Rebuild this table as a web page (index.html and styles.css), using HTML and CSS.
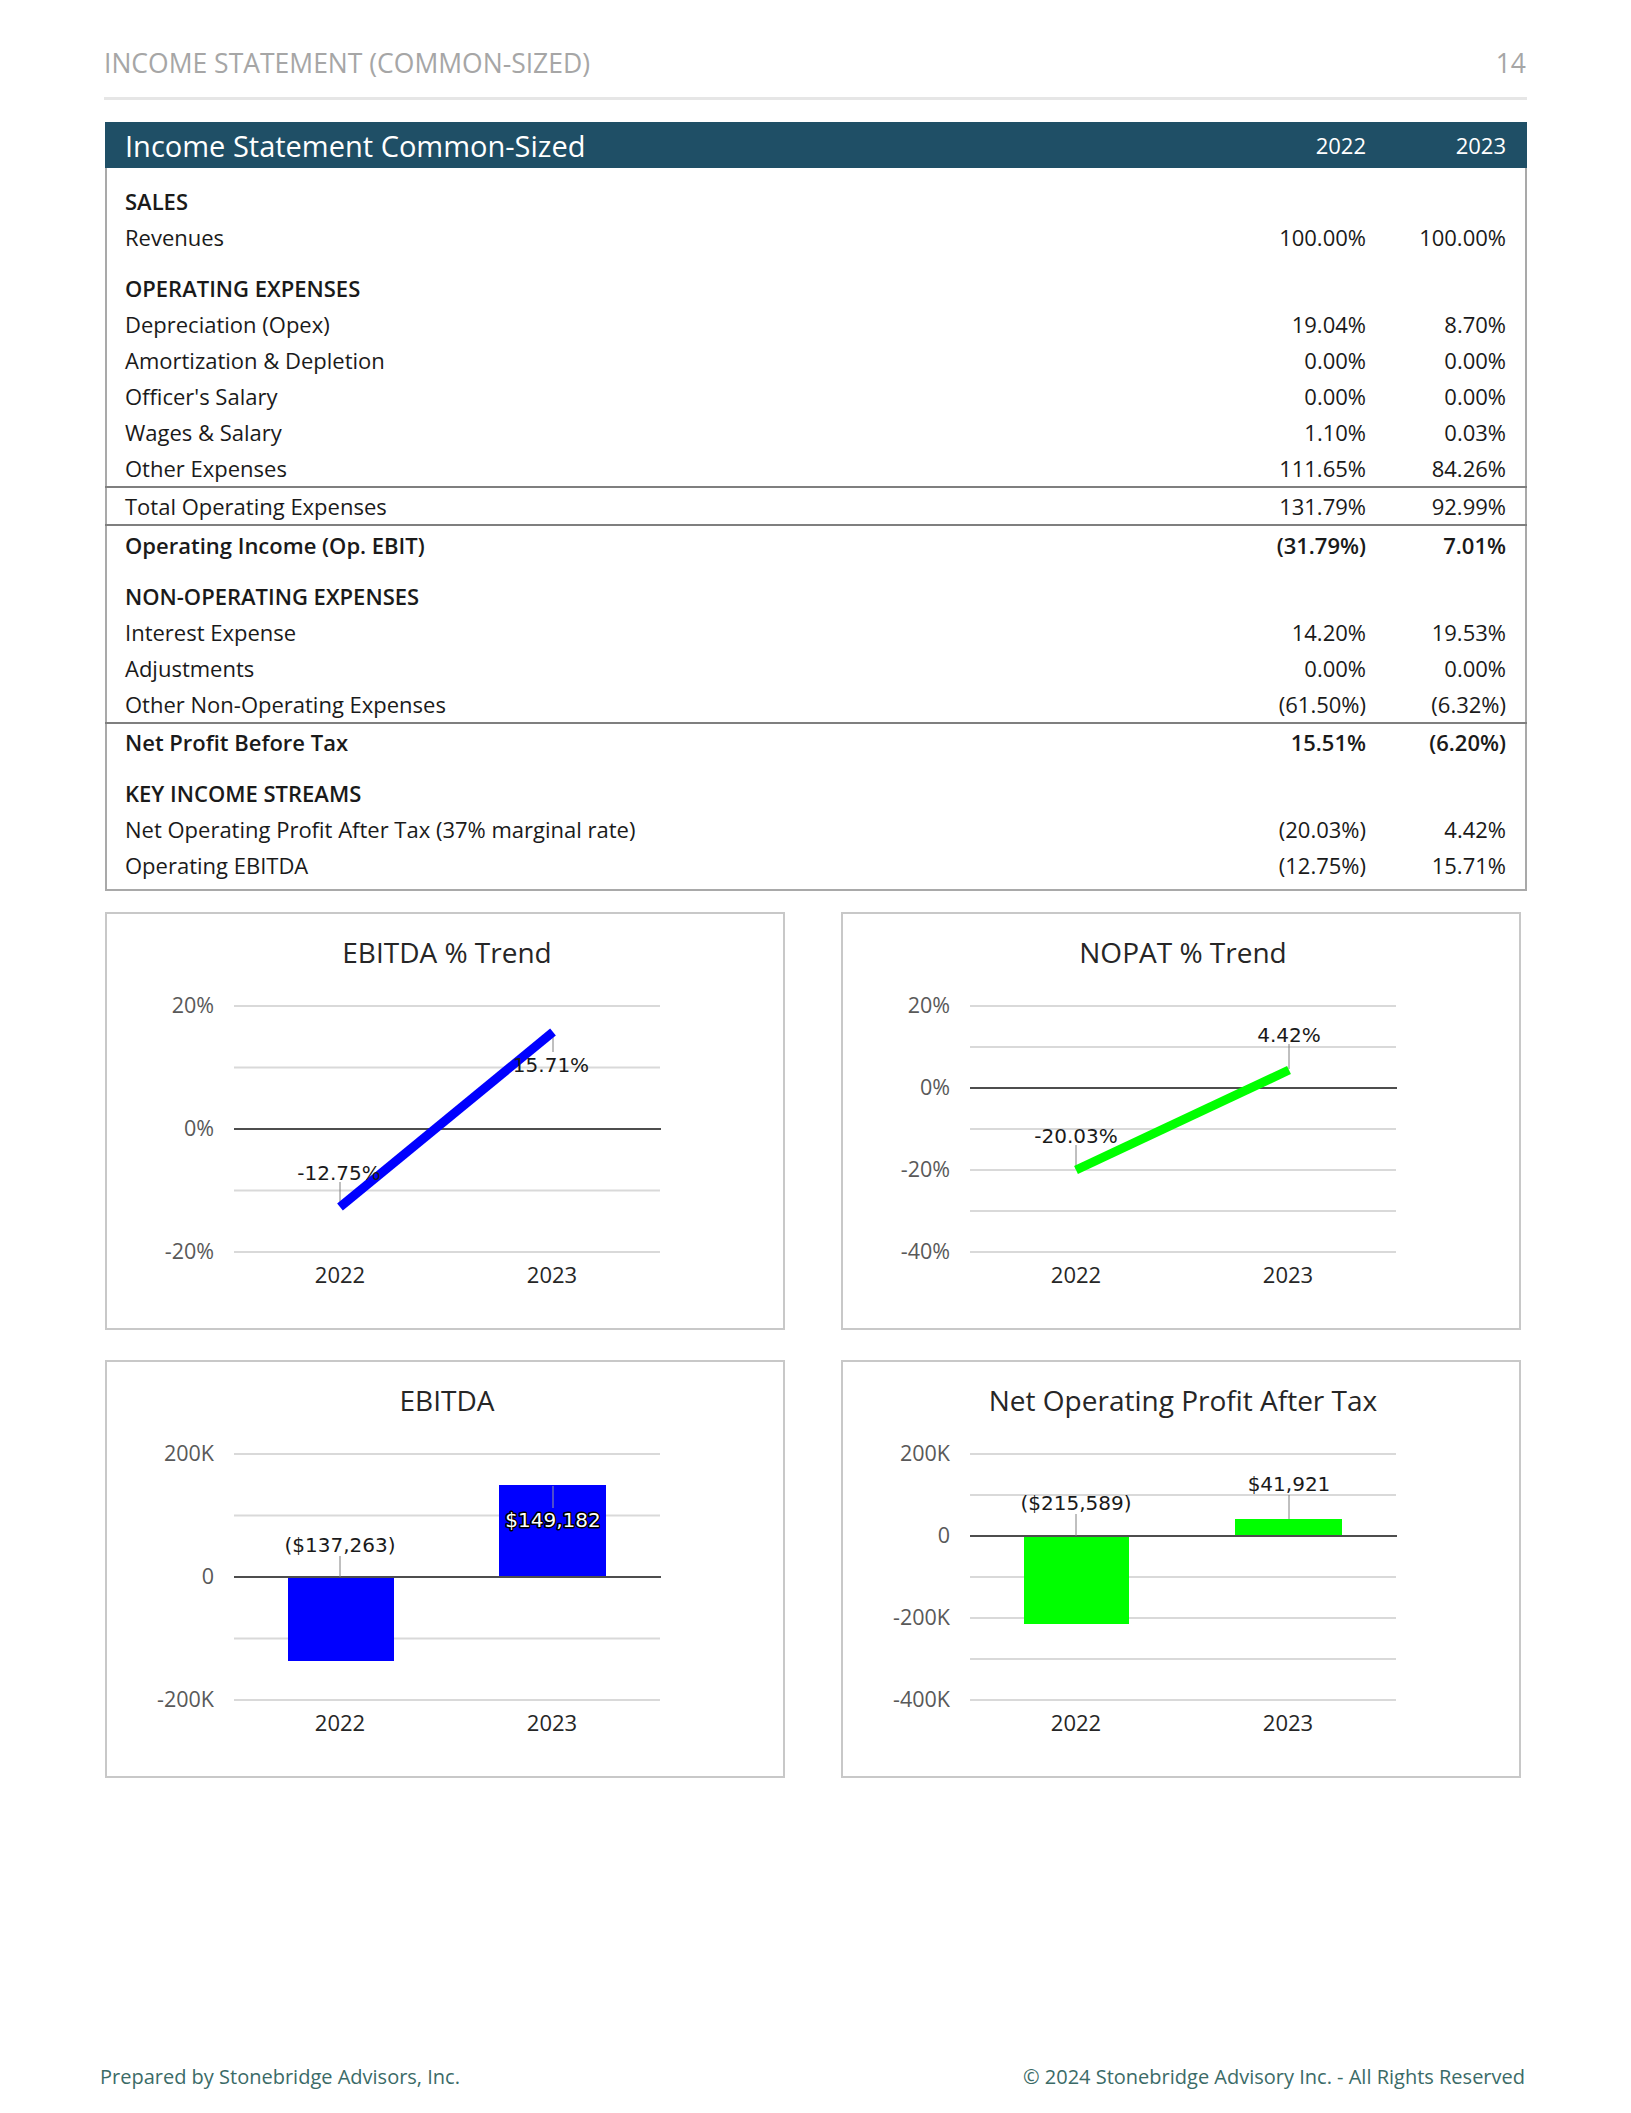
FILE: index.html
```html
<!DOCTYPE html>
<html lang="en">
<head>
<meta charset="utf-8">
<title>Income Statement (Common-Sized)</title>
<link rel="stylesheet" href="styles.css">
</head>
<body>
<div class="page">
  <header class="page-head">
    <span class="page-title">INCOME STATEMENT (COMMON-SIZED)</span>
    <span class="page-num">14</span>
  </header>

  <section class="statement">
    <div class="bar">
      <span class="bar-title">Income Statement Common-Sized</span>
      <span class="num">2022</span>
      <span class="num">2023</span>
    </div>
    <div class="rows">
      <div class="row section first"><span>SALES</span><span></span><span></span></div>
      <div class="row"><span>Revenues</span><span class="num">100.00%</span><span class="num">100.00%</span></div>

      <div class="row section"><span>OPERATING EXPENSES</span><span></span><span></span></div>
      <div class="row"><span>Depreciation (Opex)</span><span class="num">19.04%</span><span class="num">8.70%</span></div>
      <div class="row"><span>Amortization &amp; Depletion</span><span class="num">0.00%</span><span class="num">0.00%</span></div>
      <div class="row"><span>Officer's Salary</span><span class="num">0.00%</span><span class="num">0.00%</span></div>
      <div class="row"><span>Wages &amp; Salary</span><span class="num">1.10%</span><span class="num">0.03%</span></div>
      <div class="row"><span>Other Expenses</span><span class="num">111.65%</span><span class="num">84.26%</span></div>
      <div class="row ruled"><span>Total Operating Expenses</span><span class="num">131.79%</span><span class="num">92.99%</span></div>
      <div class="row strong after-rule"><span>Operating Income (Op. EBIT)</span><span class="num">(31.79%)</span><span class="num">7.01%</span></div>

      <div class="row section"><span>NON-OPERATING EXPENSES</span><span></span><span></span></div>
      <div class="row"><span>Interest Expense</span><span class="num">14.20%</span><span class="num">19.53%</span></div>
      <div class="row"><span>Adjustments</span><span class="num">0.00%</span><span class="num">0.00%</span></div>
      <div class="row"><span>Other Non-Operating Expenses</span><span class="num">(61.50%)</span><span class="num">(6.32%)</span></div>
      <div class="row strong top-rule"><span>Net Profit Before Tax</span><span class="num">15.51%</span><span class="num">(6.20%)</span></div>

      <div class="row section"><span>KEY INCOME STREAMS</span><span></span><span></span></div>
      <div class="row"><span>Net Operating Profit After Tax (37% marginal rate)</span><span class="num">(20.03%)</span><span class="num">4.42%</span></div>
      <div class="row"><span>Operating EBITDA</span><span class="num">(12.75%)</span><span class="num">15.71%</span></div>
    </div>
  </section>

  <section class="charts">
    <!-- EBITDA % Trend -->
    <div class="chart">
      <svg class="plot" viewBox="0 0 676 414" width="676" height="414">
        <text class="c-title" x="340" y="49">EBITDA % Trend</text>
        <g class="grid">
          <line x1="127" y1="92" x2="553" y2="92"/>
          <line x1="127" y1="153.5" x2="553" y2="153.5"/>
          <line x1="127" y1="276.5" x2="553" y2="276.5"/>
          <line x1="127" y1="338" x2="553" y2="338"/>
        </g>
        <line class="zero" x1="127" y1="215" x2="554" y2="215"/>
        <g class="ylab">
          <text x="107" y="99">20%</text>
          <text x="107" y="222">0%</text>
          <text x="107" y="345">-20%</text>
        </g>
        <g class="xlab">
          <text x="233" y="369">2022</text>
          <text x="445" y="369">2023</text>
        </g>
        <line class="leader" x1="233" y1="268" x2="233" y2="292"/>
        <line class="leader" x1="446" y1="120" x2="446" y2="138"/>
        <polyline class="series-blue" points="233,293 446,118"/>
        <text class="dlabel" x="232" y="266">-12.75%</text>
        <text class="dlabel" x="444" y="158">15.71%</text>
      </svg>
    </div>

    <!-- NOPAT % Trend -->
    <div class="chart">
      <svg class="plot" viewBox="0 0 676 414" width="676" height="414">
        <text class="c-title" x="340" y="49">NOPAT % Trend</text>
        <g class="grid">
          <line x1="127" y1="92" x2="553" y2="92"/>
          <line x1="127" y1="133" x2="553" y2="133"/>
          <line x1="127" y1="215" x2="553" y2="215"/>
          <line x1="127" y1="256" x2="553" y2="256"/>
          <line x1="127" y1="297" x2="553" y2="297"/>
          <line x1="127" y1="338" x2="553" y2="338"/>
        </g>
        <line class="zero" x1="127" y1="174" x2="554" y2="174"/>
        <g class="ylab">
          <text x="107" y="99">20%</text>
          <text x="107" y="181">0%</text>
          <text x="107" y="263">-20%</text>
          <text x="107" y="345">-40%</text>
        </g>
        <g class="xlab">
          <text x="233" y="369">2022</text>
          <text x="445" y="369">2023</text>
        </g>
        <line class="leader" x1="233" y1="231" x2="233" y2="255"/>
        <line class="leader" x1="446" y1="130" x2="446" y2="155"/>
        <polyline class="series-green" points="233,256 446,156"/>
        <text class="dlabel" x="233" y="229">-20.03%</text>
        <text class="dlabel" x="446" y="128">4.42%</text>
      </svg>
    </div>

    <!-- EBITDA bars -->
    <div class="chart">
      <svg class="plot" viewBox="0 0 676 414" width="676" height="414">
        <text class="c-title" x="340" y="49">EBITDA</text>
        <g class="grid">
          <line x1="127" y1="92" x2="553" y2="92"/>
          <line x1="127" y1="153.5" x2="553" y2="153.5"/>
          <line x1="127" y1="276.5" x2="553" y2="276.5"/>
          <line x1="127" y1="338" x2="553" y2="338"/>
        </g>
        <rect class="bar-blue" x="181" y="215" width="106" height="84"/>
        <rect class="bar-blue" x="392" y="123" width="107" height="92"/>
        <line class="zero" x1="127" y1="215" x2="554" y2="215"/>
        <g class="ylab">
          <text x="107" y="99">200K</text>
          <text x="107" y="222">0</text>
          <text x="107" y="345">-200K</text>
        </g>
        <g class="xlab">
          <text x="233" y="369">2022</text>
          <text x="445" y="369">2023</text>
        </g>
        <line class="leader" x1="233" y1="194" x2="233" y2="215"/>
        <line class="leader light" x1="446" y1="124" x2="446" y2="146"/>
        <text class="dlabel" x="233" y="190">($137,263)</text>
        <text class="dlabel halo" x="446" y="165">$149,182</text>
      </svg>
    </div>

    <!-- NOPAT bars -->
    <div class="chart">
      <svg class="plot" viewBox="0 0 676 414" width="676" height="414">
        <text class="c-title" x="340" y="49">Net Operating Profit After Tax</text>
        <g class="grid">
          <line x1="127" y1="92" x2="553" y2="92"/>
          <line x1="127" y1="133" x2="553" y2="133"/>
          <line x1="127" y1="215" x2="553" y2="215"/>
          <line x1="127" y1="256" x2="553" y2="256"/>
          <line x1="127" y1="297" x2="553" y2="297"/>
          <line x1="127" y1="338" x2="553" y2="338"/>
        </g>
        <rect class="bar-green" x="181" y="174" width="105" height="88"/>
        <rect class="bar-green" x="392" y="157" width="107" height="17"/>
        <line class="zero" x1="127" y1="174" x2="554" y2="174"/>
        <g class="ylab">
          <text x="107" y="99">200K</text>
          <text x="107" y="181">0</text>
          <text x="107" y="263">-200K</text>
          <text x="107" y="345">-400K</text>
        </g>
        <g class="xlab">
          <text x="233" y="369">2022</text>
          <text x="445" y="369">2023</text>
        </g>
        <line class="leader" x1="233" y1="152" x2="233" y2="174"/>
        <line class="leader" x1="446" y1="133" x2="446" y2="157"/>
        <text class="dlabel" x="233" y="148">($215,589)</text>
        <text class="dlabel" x="446" y="129">$41,921</text>
      </svg>
    </div>
  </section>

  <footer class="page-foot">
    <span>Prepared by Stonebridge Advisors, Inc.</span>
    <span>© 2024 Stonebridge Advisory Inc. - All Rights Reserved</span>
  </footer>
</div>
</body>
</html>
```

FILE: styles.css
```css
* { box-sizing: border-box; }

html, body {
  margin: 0;
  padding: 0;
  background: #ffffff;
}

body {
  font-family: "Open Sans", "Noto Sans", "DejaVu Sans", sans-serif;
  color: #1a1a1a;
}

.page {
  width: 1631px;
  height: 2113px;
  padding: 0 104px;
  display: flex;
  flex-direction: column;
}

/* ---------- page header ---------- */
.page-head {
  display: flex;
  justify-content: space-between;
  align-items: center;
  padding-top: 46px;
  padding-bottom: 17px;
  border-bottom: 3px solid #e6e6e6;
  line-height: 34px;
  font-size: 26.5px;
  color: #a6a6a6;
}

.page-num {
  padding-right: 1px;
}

/* ---------- statement table ---------- */
.statement {
  margin-top: 22px;
  margin-left: 1px;
  border: 2px solid #a9a9a9;
  border-top: none;
}

.bar {
  display: grid;
  grid-template-columns: 1fr 140px 140px;
  align-items: center;
  height: 46px;
  margin: 0 -2px;
  padding: 0 21px 0 20px;
  background: #1f4f66;
  color: #ffffff;
  font-size: 22px;
}

.bar-title {
  font-size: 29px;
}

.num {
  text-align: right;
}

.rows {
  padding: 15px 0 6px;
}

.row {
  display: grid;
  grid-template-columns: 1fr 140px 140px;
  align-items: center;
  height: 36px;
  padding: 0 19px 0 18px;
  font-size: 22px;
  color: #1a1a1a;
}

.row.section {
  margin-top: 15px;
  font-weight: 600;
}

.row.section.first {
  margin-top: 0;
}

.row.ruled {
  height: 40px;
  border-top: 2px solid #7f7f7f;
  border-bottom: 2px solid #7f7f7f;
  margin: 0 -2px;
  padding: 0 21px 0 20px;
}

.row.strong {
  font-weight: 600;
}

.row.after-rule {
  margin-top: 1px;
}

.row.top-rule {
  height: 38px;
  border-top: 2px solid #7f7f7f;
  margin: 0 -2px;
  padding: 0 21px 0 20px;
}

/* ---------- charts ---------- */
.charts {
  margin-top: 21px;
  margin-left: 1px;
  display: grid;
  grid-template-columns: 680px 680px;
  grid-auto-rows: 418px;
  column-gap: 56px;
  row-gap: 30px;
}

.chart {
  border: 2px solid #c8c8c8;
  background: #ffffff;
}

.plot {
  display: block;
}

.c-title {
  font-family: "Open Sans", sans-serif;
  font-size: 28px;
  fill: #262626;
  text-anchor: middle;
}

.grid line {
  stroke: #d9d9d9;
  stroke-width: 2;
}

.zero {
  stroke: #4d4d4d;
  stroke-width: 2;
}

.ylab text {
  font-family: "Open Sans", sans-serif;
  font-size: 21.5px;
  fill: #595959;
  text-anchor: end;
}

.xlab text {
  font-family: "Open Sans", sans-serif;
  font-size: 22px;
  fill: #262626;
  text-anchor: middle;
}

.leader {
  stroke: #808080;
  stroke-width: 1;
}

.leader.light {
  stroke: #9a9a9a;
}

.series-blue {
  fill: none;
  stroke: #0000ff;
  stroke-width: 9;
}

.series-green {
  fill: none;
  stroke: #00ff00;
  stroke-width: 9;
}

.bar-blue { fill: #0000ff; }
.bar-green { fill: #00ff00; }

.dlabel {
  font-family: "DejaVu Sans", sans-serif;
  font-size: 20px;
  fill: #1a1a1a;
  text-anchor: middle;
}

.dlabel.halo {
  fill: #ffffff;
  stroke: #000000;
  stroke-width: 3px;
  paint-order: stroke;
  stroke-linejoin: round;
}

/* ---------- footer ---------- */
.page-foot {
  margin-top: auto;
  margin-left: -4px;
  margin-right: 2px;
  margin-bottom: 23px;
  display: flex;
  justify-content: space-between;
  line-height: 26px;
  font-size: 20px;
  color: #3b6b67;
}
```
